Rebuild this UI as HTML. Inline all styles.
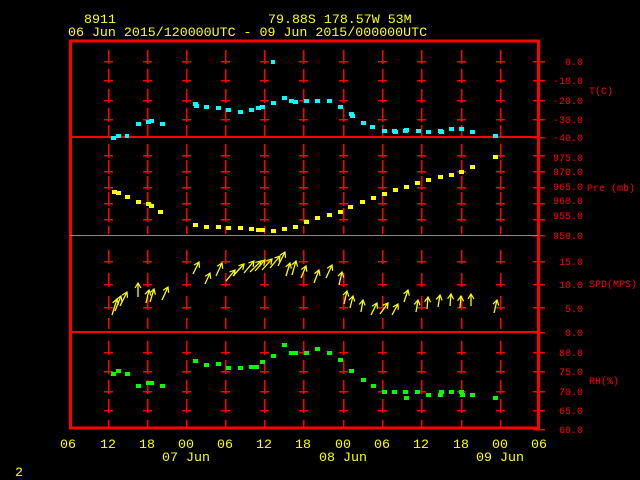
<!DOCTYPE html>
<html><head><meta charset="utf-8"><style>
html,body{margin:0;padding:0;background:#000;width:640px;height:480px;overflow:hidden}
svg{display:block}
text{font-family:"Liberation Mono",monospace}
.y{fill:#ffff00;font-size:13.3px}
.r{fill:#ff0000;font-size:10px}
</style></head><body>
<svg width="640" height="480" viewBox="0 0 640 480" xmlns="http://www.w3.org/2000/svg">
<defs>
<g id="c"><path d="M0.5 -11V3M-4 0.5H5" stroke="#f00" stroke-width="1.5" fill="none" shape-rendering="crispEdges"/></g>
<marker id="ah" markerWidth="8" markerHeight="8" refX="6" refY="4" orient="auto" markerUnits="userSpaceOnUse"><path d="M1 1L6 4L1 7" stroke="#ff0" fill="none" stroke-width="1.2"/></marker>
<g id="col">
<use href="#c" y="61"/><use href="#c" y="80"/><use href="#c" y="100"/><use href="#c" y="119"/>
<use href="#c" y="155"/><use href="#c" y="171"/><use href="#c" y="187"/><use href="#c" y="203"/><use href="#c" y="219"/>
<use href="#c" y="261"/><use href="#c" y="284"/><use href="#c" y="307"/>
<use href="#c" y="352"/><use href="#c" y="371"/><use href="#c" y="391"/><use href="#c" y="410"/>
<path d="M0.5 318V329M0.5 420V427M0.5 125V136M0.5 226V234" stroke="#f00" stroke-width="1.5" shape-rendering="crispEdges"/>
</g>
</defs>
<text class="y" x="84" y="23">8911</text>
<text class="y" x="268" y="23">79.88S  178.57W    53M</text>
<text class="y" x="68" y="36">06 Jun 2015/120000UTC - 09 Jun 2015/000000UTC</text>

<use href="#col" x="108"/><use href="#col" x="147"/><use href="#col" x="186"/><use href="#col" x="225"/><use href="#col" x="264"/><use href="#col" x="303"/><use href="#col" x="343"/><use href="#col" x="382"/><use href="#col" x="421"/><use href="#col" x="461"/><use href="#col" x="500"/>
<g stroke="#f00" stroke-width="1.5" shape-rendering="crispEdges">
<path d="M533 61.5H545M533 80.5H545M533 100.5H545M533 119.5H545M533 137.5H545M533 155.5H545M533 171.5H545M533 187.5H545M533 203.5H545M533 219.5H545M533 235.5H545M533 261.5H545M533 284.5H545M533 307.5H545M533 332.5H545M533 352.5H545M533 371.5H545M533 391.5H545M533 410.5H545M533 429.5H545"/>
</g>
<rect x="70.5" y="41" width="468" height="387" fill="none" stroke="#f00" stroke-width="3" shape-rendering="crispEdges"/>
<path d="M70 137H540M70 332H540" stroke="#f00" stroke-width="2" shape-rendering="crispEdges"/>
<path d="M70 235.5H538" stroke="#888" stroke-width="1" shape-rendering="crispEdges"/>

<g class="r" text-anchor="end">
<text x="583" y="65">0.0</text><text x="583" y="84">-10.0</text><text x="583" y="104">-20.0</text><text x="583" y="123">-30.0</text><text x="583" y="141">-40.0</text>
<text x="583" y="161">975.0</text><text x="583" y="175">970.0</text><text x="583" y="190">965.0</text><text x="583" y="204">960.0</text><text x="583" y="219">955.0</text><text x="583" y="239">950.0</text>
<text x="583" y="265">15.0</text><text x="583" y="288">10.0</text><text x="583" y="312">5.0</text><text x="583" y="336">0.0</text>
<text x="583" y="356">80.0</text><text x="583" y="375">75.0</text><text x="583" y="395">70.0</text><text x="583" y="414">65.0</text><text x="583" y="433">60.0</text>
</g>
<g class="r">
<text x="589" y="94">T(C)</text><text x="587" y="191">Pre (mb)</text><text x="589" y="287">SPD(MPS)</text><text x="589" y="384">RH(%)</text>
</g>

<g fill="#00ffff" shape-rendering="crispEdges">
<rect x="111" y="136" width="5" height="4"/><rect x="116" y="134" width="5" height="4"/><rect x="125" y="134" width="4" height="4"/><rect x="136" y="122" width="5" height="4"/><rect x="146" y="120" width="5" height="4"/><rect x="149" y="119" width="5" height="4"/><rect x="160" y="122" width="5" height="4"/><rect x="193" y="102" width="5" height="4"/><rect x="194" y="104" width="5" height="4"/><rect x="204" y="105" width="5" height="4"/><rect x="216" y="106" width="5" height="4"/><rect x="226" y="108" width="5" height="4"/><rect x="238" y="110" width="5" height="4"/><rect x="249" y="108" width="5" height="4"/><rect x="256" y="106" width="5" height="4"/><rect x="260" y="105" width="5" height="4"/><rect x="271" y="101" width="5" height="4"/><rect x="282" y="96" width="5" height="4"/><rect x="289" y="99" width="5" height="4"/><rect x="293" y="100" width="5" height="4"/><rect x="304" y="99" width="5" height="4"/><rect x="315" y="99" width="5" height="4"/><rect x="327" y="99" width="5" height="4"/><rect x="338" y="105" width="5" height="4"/><rect x="349" y="112" width="5" height="4"/><rect x="350" y="114" width="5" height="4"/><rect x="361" y="121" width="5" height="4"/><rect x="370" y="125" width="5" height="4"/><rect x="382" y="129" width="5" height="4"/><rect x="392" y="129" width="5" height="4"/><rect x="393" y="130" width="5" height="4"/><rect x="403" y="129" width="5" height="4"/><rect x="404" y="128" width="5" height="4"/><rect x="416" y="129" width="5" height="4"/><rect x="426" y="130" width="5" height="4"/><rect x="438" y="129" width="5" height="4"/><rect x="439" y="130" width="5" height="4"/><rect x="449" y="127" width="5" height="4"/><rect x="459" y="127" width="5" height="4"/><rect x="470" y="130" width="5" height="4"/><rect x="493" y="134" width="5" height="4"/><rect x="271" y="60" width="4" height="4"/>
</g>

<g fill="#ffff00" shape-rendering="crispEdges">
<rect x="112" y="190" width="5" height="4"/><rect x="116" y="191" width="5" height="4"/><rect x="125" y="195" width="5" height="4"/><rect x="136" y="200" width="5" height="4"/><rect x="146" y="202" width="5" height="4"/><rect x="149" y="204" width="5" height="4"/><rect x="158" y="210" width="5" height="4"/><rect x="193" y="223" width="5" height="4"/><rect x="204" y="225" width="5" height="4"/><rect x="216" y="225" width="5" height="4"/><rect x="226" y="226" width="5" height="4"/><rect x="238" y="226" width="5" height="4"/><rect x="249" y="227" width="5" height="4"/><rect x="256" y="228" width="5" height="4"/><rect x="260" y="228" width="5" height="4"/><rect x="271" y="229" width="5" height="4"/><rect x="282" y="227" width="5" height="4"/><rect x="293" y="225" width="5" height="4"/><rect x="304" y="220" width="5" height="4"/><rect x="315" y="216" width="5" height="4"/><rect x="327" y="213" width="5" height="4"/><rect x="338" y="210" width="5" height="4"/><rect x="348" y="205" width="5" height="4"/><rect x="360" y="200" width="5" height="4"/><rect x="371" y="196" width="5" height="4"/><rect x="382" y="192" width="5" height="4"/><rect x="393" y="188" width="5" height="4"/><rect x="404" y="185" width="5" height="4"/><rect x="415" y="181" width="5" height="4"/><rect x="426" y="178" width="5" height="4"/><rect x="438" y="175" width="5" height="4"/><rect x="449" y="173" width="5" height="4"/><rect x="459" y="170" width="5" height="4"/><rect x="470" y="165" width="5" height="4"/><rect x="493" y="155" width="5" height="4"/>
</g>

<g fill="#00ff00" shape-rendering="crispEdges">
<rect x="111" y="372" width="5" height="4"/><rect x="116" y="369" width="5" height="4"/><rect x="125" y="372" width="5" height="4"/><rect x="136" y="384" width="5" height="4"/><rect x="146" y="381" width="5" height="4"/><rect x="149" y="381" width="5" height="4"/><rect x="160" y="384" width="5" height="4"/><rect x="193" y="359" width="5" height="4"/><rect x="204" y="363" width="5" height="4"/><rect x="216" y="362" width="5" height="4"/><rect x="226" y="366" width="5" height="4"/><rect x="238" y="366" width="5" height="4"/><rect x="249" y="365" width="5" height="4"/><rect x="254" y="365" width="5" height="4"/><rect x="260" y="360" width="5" height="4"/><rect x="271" y="354" width="5" height="4"/><rect x="282" y="343" width="5" height="4"/><rect x="289" y="351" width="5" height="4"/><rect x="293" y="351" width="5" height="4"/><rect x="304" y="351" width="5" height="4"/><rect x="315" y="347" width="5" height="4"/><rect x="327" y="351" width="5" height="4"/><rect x="338" y="358" width="5" height="4"/><rect x="349" y="369" width="5" height="4"/><rect x="361" y="378" width="5" height="4"/><rect x="371" y="384" width="5" height="4"/><rect x="382" y="390" width="5" height="4"/><rect x="392" y="390" width="5" height="4"/><rect x="403" y="390" width="5" height="4"/><rect x="404" y="396" width="5" height="4"/><rect x="415" y="390" width="5" height="4"/><rect x="426" y="393" width="5" height="4"/><rect x="438" y="393" width="5" height="4"/><rect x="439" y="390" width="5" height="4"/><rect x="449" y="390" width="5" height="4"/><rect x="459" y="390" width="5" height="4"/><rect x="460" y="393" width="5" height="4"/><rect x="470" y="393" width="5" height="4"/><rect x="493" y="396" width="5" height="4"/>
</g>

<g stroke="#ffff00" stroke-width="1.3" fill="none" marker-end="url(#ah)">
<path d="M112 315L117 299"/><path d="M115 311L121 296"/><path d="M120 306L127 292"/><path d="M138 297L138 283"/><path d="M146 303L149 290"/><path d="M150 302L154 289"/><path d="M162 300L168 287"/>
<path d="M193 274L199 262"/><path d="M205 284L210 273"/><path d="M216 276L222 263"/><path d="M226 281L235 270"/><path d="M233 276L244 264"/><path d="M244 273L254 261"/><path d="M250 272L261 261"/><path d="M255 271L265 260"/><path d="M262 270L272 259"/><path d="M270 268L280 256"/><path d="M278 266L285 252"/><path d="M286 276L290 263"/><path d="M292 275L296 261"/><path d="M301 278L306 266"/><path d="M314 283L319 270"/><path d="M326 278L332 265"/><path d="M339 285L342 272"/>
<path d="M344 304L347 291"/><path d="M350 308L353 296"/><path d="M361 312L363 300"/><path d="M371 315L377 303"/><path d="M380 314L388 303"/><path d="M392 315L398 304"/><path d="M404 302L408 290"/><path d="M416 312L418 300"/><path d="M427 309L428 297"/><path d="M438 307L440 295"/><path d="M450 306L451 294"/><path d="M460 308L461 296"/><path d="M471 306L471 294"/><path d="M494 313L497 300"/>
</g>

<g class="y" text-anchor="middle">
<text x="68" y="448">06</text><text x="108" y="448">12</text><text x="147" y="448">18</text><text x="186" y="448">00</text><text x="225" y="448">06</text><text x="264" y="448">12</text><text x="303" y="448">18</text><text x="343" y="448">00</text><text x="382" y="448">06</text><text x="421" y="448">12</text><text x="461" y="448">18</text><text x="500" y="448">00</text><text x="539" y="448">06</text>
<text x="186" y="461">07 Jun</text><text x="343" y="461">08 Jun</text><text x="500" y="461">09 Jun</text>
</g>
<text class="y" x="15" y="476">2</text>
</svg>
</body></html>
